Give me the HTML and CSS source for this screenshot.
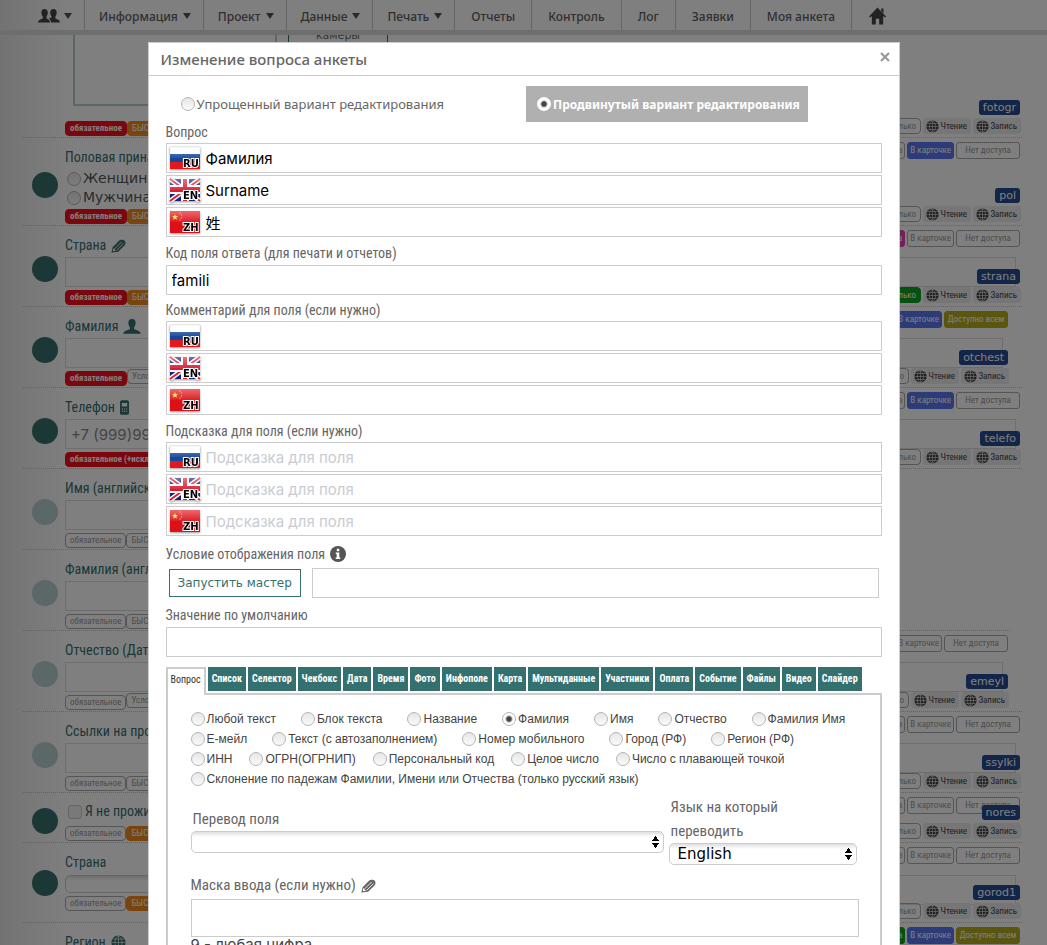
FILE: index.html
```html
<!DOCTYPE html>
<html lang="ru">
<head>
<meta charset="utf-8">
<title>Изменение вопроса анкеты</title>
<link rel="stylesheet" href="styles.css">
</head>
<body>
<svg class="sprite" aria-hidden="true">
  <defs>
    <linearGradient id="gloss" x1="0" y1="0" x2="0" y2="1"><stop offset="0" stop-color="#fff" stop-opacity=".38"/><stop offset="1" stop-color="#fff" stop-opacity=".06"/></linearGradient>
    <symbol id="flag-ru" viewBox="0 0 32 24"><path fill="#fff" d="M1 1h30v7H1z"/><path fill="#14489a" d="M1 8h30v8H1z"/><path fill="#e2181c" d="M1 16h30v7H1z"/><path fill="none" stroke="#ccc" stroke-width=".5" d="M1 8V1h30v7"/><path fill="url(#gloss)" d="M1 1h30v11H1z"/></symbol>
    <symbol id="flag-en" viewBox="0 0 32 24"><path fill="#1a1f78" d="M1 1h30v22H1z"/><path stroke="#fff" stroke-width="5" d="M1 1l30 22M31 1L1 23"/><path stroke="#d81e34" stroke-width="2" d="M1 1l30 22M31 1L1 23"/><path fill="#fff" d="M12 1h8v22h-8z"/><path fill="#fff" d="M1 7h30v9H1z"/><path fill="#d81e34" d="M14 1h4v22h-4z"/><path fill="#d81e34" d="M1 9h30v5H1z"/><path fill="url(#gloss)" d="M1 1h30v11H1z"/></symbol>
    <symbol id="flag-zh" viewBox="0 0 32 24"><path fill="#dd1017" d="M1 1h30v22H1z"/><path fill="#ffe636" d="M6 4l.8 2.100 2.200.1-1.700 1.400.6 2.200L6 8.600 4.100 9.800l.6-2.200L3 6.200l2.200-.1z"/><path fill="#ffe636" d="M10.500 2.500h1v1h-1zM12 4.500h1v1h-1zM12 7.500h1v1h-1zM10.500 9.500h1v1h-1z"/><path fill="url(#gloss)" d="M1 1h30v11H1z"/></symbol>
    <symbol id="globe" viewBox="0 0 16 16"><circle cx="8" cy="8" r="7.500" fill="currentColor"/><path fill="none" stroke="#fff" stroke-opacity=".75" stroke-width=".9" d="M8 .5v15M.5 8h15M2 4.300h12M2 11.700h12M8 .5C3 4 3 12 8 15.500M8 .5c5 3.500 5 11.500 0 15"/></symbol>
    <symbol id="user" viewBox="0 0 18 15"><path fill="currentColor" d="M9 0c2.500 0 3.700 1.600 3.600 4 0 2-.8 3.500-1.500 4.300v1.900c2 .8 6.400 1.500 6.700 4.600H.2c.3-3.100 4.700-3.800 6.700-4.600V8.300C6.200 7.500 5.400 6 5.400 4 5.300 1.600 6.500 0 9 0z"/></symbol>
    <symbol id="users" viewBox="0 0 22 14"><path fill="currentColor" d="M6.500 0c2.100 0 3.400 1.300 3.300 3.600 0 1.900-.7 3.200-1.300 4v2c1.500.7 3.300 1.200 3.500 4H0c.2-2.800 3.200-3.200 4.700-4v-2c-.6-.8-1.300-2.100-1.300-4C3.300 1.300 4.500 0 6.500 0zM15.500 0c2.100 0 3.300 1.300 3.200 3.600 0 1.900-.7 3.200-1.300 4v2c1.500.8 4.400 1.200 4.600 4h-9c-.1-2.200-1-3.300-2.200-4 1-.6 1.300-.4 2.700-1V7.600c-.6-.8-1.300-2.100-1.300-4C12.200 1.300 13.500 0 15.500 0z"/></symbol>
    <symbol id="home" viewBox="0 0 18 18"><path fill="currentColor" d="M9 0l9 9.500-1.200 1.200-1.800-1.800V18h-4.200v-6H7.200v6H3V8.900l-1.800 1.800L0 9.500zM13 1h2.300v5L13 3.600z"/></symbol>
    <symbol id="pencil" viewBox="0 0 16 14"><path fill="currentColor" d="M.4 13.800l1.300-5.500L8.800 1.200C10.200-.2 16-.3 15.400 4.200c-.1 1-.5 1.800-1.200 2.500L7.600 13z"/><path fill="none" stroke="#fff" stroke-width=".9" d="M4 10l7.300-7.300M6 11.700l7.400-7.400"/><path fill="#fff" d="M2.500 9.200l2.800 2.800-2.600.6-.8-.8z"/></symbol>
    <symbol id="phone" viewBox="0 0 10 16"><path fill="currentColor" fill-rule="evenodd" d="M1.500 0h7L10 1.200V15l-1 1H1l-1-1V1.200zM2 3v4h6V3zM2 9v1.200h1.400V9zm2.300 0v1.200h1.400V9zm2.300 0v1.200H8V9zM2 11.500v1.200h1.400v-1.200zm2.300 0v1.200h1.400v-1.200zm2.300 0v1.200H8v-1.200z"/></symbol>
    <symbol id="info" viewBox="0 0 16 16"><circle cx="8" cy="8" r="8" fill="currentColor"/><path fill="#fff" d="M6.800 2.800h2.500v2.400H6.800zM5.800 6.600h3.500v4.900h1V13H5.700v-1.500h1V8h-.9z"/></symbol>
  </defs>
</svg>

<div class="page">
  <nav class="topnav">
    <a class="topnav-item people" href="#" aria-label="Пользователи"><svg class="i-users"><use href="#users"/></svg><i class="caret"></i></a>
    <a class="topnav-item" href="#">Информация<i class="caret"></i></a>
    <a class="topnav-item" href="#">Проект<i class="caret"></i></a>
    <a class="topnav-item" href="#">Данные<i class="caret"></i></a>
    <a class="topnav-item" href="#">Печать<i class="caret"></i></a>
    <a class="topnav-item link" href="#">Отчеты</a>
    <a class="topnav-item link" href="#">Контроль</a>
    <a class="topnav-item link" href="#">Лог</a>
    <a class="topnav-item link" href="#">Заявки</a>
    <a class="topnav-item link" href="#">Моя анкета</a>
    <a class="topnav-item" href="#" aria-label="Домой"><svg class="i-home"><use href="#home"/></svg></a>
  </nav>

  <main class="list">
    <section class="row photo-row">
      <div class="dotcol"></div>
      <div class="body">
        <div class="photo"><div class="photo-box"></div><div class="camera">камеры</div></div>
        <div class="tags"><span class="tag red">обязательное</span><span class="tag orange">БЫСТРОЕ</span></div>
      </div>
      <div class="meta"><b class="badge">fotogr</b><div class="acts"><span class="tag">Только</span><button class="act"><svg><use href="#globe"/></svg>Чтение</button><button class="act"><svg><use href="#globe"/></svg>Запись</button></div><div class="pills"><span class="pill">Да</span><span class="pill blue">В карточке</span><span class="pill wide">Нет доступа</span></div></div>
    </section>
    <section class="row">
      <div class="dotcol"><i class="dot"></i></div>
      <div class="body">
        <h3>Половая принадлежность</h3>
        <div class="choices"><label><input type="radio" name="sex">Женщина</label><label><input type="radio" name="sex">Мужчина</label></div>
        <div class="tags"><span class="tag red">обязательное</span><span class="tag orange">БЫСТРОЕ</span></div>
      </div>
      <div class="meta"><b class="badge">pol</b><div class="acts"><span class="tag">Только</span><button class="act"><svg><use href="#globe"/></svg>Чтение</button><button class="act"><svg><use href="#globe"/></svg>Запись</button></div><div class="pills"><span class="pill pink">Да</span><span class="pill">В карточке</span><span class="pill wide">Нет доступа</span></div></div>
    </section>
    <section class="row">
      <div class="dotcol"><i class="dot"></i></div>
      <div class="body">
        <h3>Страна <svg class="i-pencil"><use href="#pencil"/></svg></h3>
        <input class="box" aria-label="Страна">
        <div class="tags"><span class="tag red">обязательное</span><span class="tag orange">БЫСТРОЕ</span></div>
      </div>
      <div class="meta"><b class="badge">strana</b><div class="acts"><span class="tag green">Только</span><button class="act"><svg><use href="#globe"/></svg>Чтение</button><button class="act"><svg><use href="#globe"/></svg>Запись</button></div><div class="pills inset"><span class="pill blue">В карточке</span><span class="pill wide olive">Доступно всем</span></div></div>
    </section>
    <section class="row short">
      <div class="dotcol"><i class="dot"></i></div>
      <div class="body">
        <h3>Фамилия <svg class="i-user"><use href="#user"/></svg></h3>
        <input class="box" aria-label="Фамилия">
        <div class="tags"><span class="tag red">обязательное</span><span class="tag raised">Условие</span></div>
      </div>
      <div class="meta"><b class="badge">otchest</b><div class="acts"><span class="tag">Только</span><button class="act"><svg><use href="#globe"/></svg>Чтение</button><button class="act"><svg><use href="#globe"/></svg>Запись</button></div><div class="pills"><span class="pill">Да</span><span class="pill blue">В карточке</span><span class="pill wide">Нет доступа</span></div></div>
    </section>
    <section class="row">
      <div class="dotcol"><i class="dot"></i></div>
      <div class="body">
        <h3>Телефон <svg class="i-phone"><use href="#phone"/></svg></h3>
        <input class="box" aria-label="Телефон" placeholder="+7 (999)999-99-99">
        <div class="tags"><span class="tag red">обязательное (+исключение)</span></div>
      </div>
      <div class="meta"><b class="badge">telefo</b><div class="acts"><span class="tag">Только</span><button class="act"><svg><use href="#globe"/></svg>Чтение</button><button class="act"><svg><use href="#globe"/></svg>Запись</button></div></div>
    </section>
    <section class="row half">
      <div class="dotcol"><i class="dot pale"></i></div>
      <div class="body">
        <h3>Имя (английский)</h3>
        <input class="box" aria-label="Имя">
        <div class="tags"><span class="tag">обязательное</span><span class="tag">БЫСТРОЕ</span></div>
      </div>
    </section>
    <section class="row pills-only">
      <div class="dotcol"><i class="dot pale"></i></div>
      <div class="body">
        <h3>Фамилия (английский)</h3>
        <input class="box" aria-label="Фамилия (английский)">
        <div class="tags"><span class="tag">обязательное</span><span class="tag">БЫСТРОЕ</span></div>
      </div>
      <div class="meta"><div class="pills"><span class="pill">В карточке</span><span class="pill wide">Нет доступа</span></div></div>
    </section>
    <section class="row short">
      <div class="dotcol"><i class="dot pale"></i></div>
      <div class="body">
        <h3>Отчество (Дательный)</h3>
        <input class="box" aria-label="Отчество">
        <div class="tags"><span class="tag">обязательное</span><span class="tag raised">Условие</span></div>
      </div>
      <div class="meta"><b class="badge">emeyl</b><div class="acts"><span class="tag">Только</span><button class="act"><svg><use href="#globe"/></svg>Чтение</button><button class="act"><svg><use href="#globe"/></svg>Запись</button></div><div class="pills"><span class="pill">Да</span><span class="pill">В карточке</span><span class="pill wide">Нет доступа</span></div></div>
    </section>
    <section class="row">
      <div class="dotcol"><i class="dot pale"></i></div>
      <div class="body">
        <h3>Ссылки на профили</h3>
        <input class="box" aria-label="Ссылки">
        <div class="tags"><span class="tag">обязательное</span><span class="tag">БЫСТРОЕ</span></div>
      </div>
      <div class="meta"><b class="badge">ssylki</b><div class="acts"><span class="tag">Только</span><button class="act"><svg><use href="#globe"/></svg>Чтение</button><button class="act"><svg><use href="#globe"/></svg>Запись</button></div><div class="pills"><span class="pill">Да</span><span class="pill">В карточке</span><span class="pill wide">Нет доступа</span></div></div>
    </section>
    <section class="row thin">
      <div class="dotcol"><i class="dot"></i></div>
      <div class="body">
        <h3><label class="check"><input type="checkbox">Я не проживаю</label></h3>
        <div class="tags"><span class="tag">обязательное</span><span class="tag orange">БЫСТРОЕ</span></div>
      </div>
      <div class="meta"><b class="badge">nores</b><div class="acts"><span class="tag">Только</span><button class="act"><svg><use href="#globe"/></svg>Чтение</button><button class="act"><svg><use href="#globe"/></svg>Запись</button></div><div class="pills"><span class="pill">Да</span><span class="pill">В карточке</span><span class="pill wide">Нет доступа</span></div></div>
    </section>
    <section class="row roomy">
      <div class="dotcol"><i class="dot"></i></div>
      <div class="body">
        <h3>Страна</h3>
        <div class="selectline"><select class="drop" aria-label="Страна"><option></option></select><input class="box" aria-label="Город"></div>
        <div class="tags"><span class="tag">обязательное</span><span class="tag orange">БЫСТРОЕ</span></div>
      </div>
      <div class="meta"><b class="badge">gorod1</b><div class="acts"><span class="tag">Только</span><button class="act"><svg><use href="#globe"/></svg>Чтение</button><button class="act"><svg><use href="#globe"/></svg>Запись</button></div><div class="pills"><span class="pill green">Да</span><span class="pill blue">В карточке</span><span class="pill wide olive">Доступно всем</span></div></div>
    </section>
    <section class="row">
      <div class="dotcol"></div>
      <div class="body"><h3>Регион <svg class="i-globe"><use href="#globe"/></svg></h3></div>
    </section>
  </main>
</div>

<div class="overlay">
  <div class="modal" role="dialog" aria-labelledby="dlg-title">
    <header class="modal-head">
      <h2 id="dlg-title">Изменение вопроса анкеты</h2>
      <button class="close" aria-label="Закрыть"><svg viewBox="0 0 10 10"><path d="M1 1l8 8M9 1L1 9" fill="none" stroke="#999" stroke-width="2.200"/></svg></button>
    </header>
    <form class="modal-body">
      <div class="modes">
        <label class="mode"><input type="radio" name="mode">Упрощенный вариант редактирования</label>
        <label class="mode active"><input type="radio" name="mode" checked>Продвинутый вариант редактирования</label>
      </div>

      <label class="caption tight" for="q-ru">Вопрос</label>
      <div class="fields">
        <div class="field"><svg class="flag"><use href="#flag-ru"/><text x="14" y="21">RU</text></svg><input id="q-ru" value="Фамилия"></div>
        <div class="field"><svg class="flag"><use href="#flag-en"/><text x="14" y="21">EN</text></svg><input aria-label="Вопрос EN" value="Surname"></div>
        <div class="field"><svg class="flag"><use href="#flag-zh"/><text x="14" y="21">ZH</text></svg><input aria-label="Вопрос ZH" value="姓"></div>
      </div>

      <label class="caption" for="code">Код поля ответа (для печати и отчетов)</label>
      <div class="fields"><div class="field plain"><input id="code" value="famili"></div></div>

      <label class="caption low" for="c-ru">Комментарий для поля (если нужно)</label>
      <div class="fields">
        <div class="field"><svg class="flag"><use href="#flag-ru"/><text x="14" y="21">RU</text></svg><input id="c-ru"></div>
        <div class="field"><svg class="flag"><use href="#flag-en"/><text x="14" y="21">EN</text></svg><input aria-label="Комментарий EN"></div>
        <div class="field"><svg class="flag"><use href="#flag-zh"/><text x="14" y="21">ZH</text></svg><input aria-label="Комментарий ZH"></div>
      </div>

      <label class="caption mid" for="h-ru">Подсказка для поля (если нужно)</label>
      <div class="fields">
        <div class="field"><svg class="flag"><use href="#flag-ru"/><text x="14" y="21">RU</text></svg><input id="h-ru" placeholder="Подсказка для поля"></div>
        <div class="field"><svg class="flag"><use href="#flag-en"/><text x="14" y="21">EN</text></svg><input aria-label="Подсказка EN" placeholder="Подсказка для поля"></div>
        <div class="field"><svg class="flag"><use href="#flag-zh"/><text x="14" y="21">ZH</text></svg><input aria-label="Подсказка ZH" placeholder="Подсказка для поля"></div>
      </div>

      <label class="caption tall" for="cond">Условие отображения поля <svg class="i-info"><use href="#info"/></svg></label>
      <div class="condition">
        <button type="button" class="wizard">Запустить мастер</button>
        <div class="field plain"><input id="cond"></div>
      </div>

      <label class="caption last" for="def">Значение по умолчанию</label>
      <div class="fields"><div class="field plain"><input id="def"></div></div>

      <div class="tabs" role="tablist">
        <button type="button" class="tab current" role="tab">Вопрос</button>
        <button type="button" class="tab" role="tab">Список</button>
        <button type="button" class="tab" role="tab">Селектор</button>
        <button type="button" class="tab" role="tab">Чекбокс</button>
        <button type="button" class="tab" role="tab">Дата</button>
        <button type="button" class="tab" role="tab">Время</button>
        <button type="button" class="tab" role="tab">Фото</button>
        <button type="button" class="tab" role="tab">Инфополе</button>
        <button type="button" class="tab" role="tab">Карта</button>
        <button type="button" class="tab" role="tab">Мультиданные</button>
        <button type="button" class="tab" role="tab">Участники</button>
        <button type="button" class="tab" role="tab">Оплата</button>
        <button type="button" class="tab" role="tab">Событие</button>
        <button type="button" class="tab" role="tab">Файлы</button>
        <button type="button" class="tab" role="tab">Видео</button>
        <button type="button" class="tab" role="tab">Слайдер</button>
      </div>
      <div class="panel">
        <div class="kinds">
          <div class="kindline"><label><input type="radio" name="kind">Любой текст</label><label><input type="radio" name="kind">Блок текста</label><label><input type="radio" name="kind">Название</label><label><input type="radio" name="kind" checked>Фамилия</label><label><input type="radio" name="kind">Имя</label><label><input type="radio" name="kind">Отчество</label><label><input type="radio" name="kind">Фамилия Имя</label></div>
          <div class="kindline"><label><input type="radio" name="kind">Е-мейл</label><label><input type="radio" name="kind">Текст (с автозаполнением)</label><label><input type="radio" name="kind">Номер мобильного</label><label><input type="radio" name="kind">Город (РФ)</label><label><input type="radio" name="kind">Регион (РФ)</label></div>
          <div class="kindline close-set"><label><input type="radio" name="kind">ИНН</label><label><input type="radio" name="kind">ОГРН(ОГРНИП)</label><label><input type="radio" name="kind">Персональный код</label><label><input type="radio" name="kind">Целое число</label><label><input type="radio" name="kind">Число с плавающей точкой</label></div>
          <div class="kindline"><label><input type="radio" name="kind">Склонение по падежам Фамилии, Имени или Отчества (только русский язык)</label></div>
        </div>
        <div class="translate">
          <div class="source"><label for="tr">Перевод поля</label><select id="tr" class="drop"><option></option></select></div>
          <div class="target"><label for="lang">Язык на который<br>переводить</label><select id="lang" class="drop"><option>English</option></select></div>
        </div>
        <label class="mask-label" for="mask">Маска ввода (если нужно) <svg class="i-pencil"><use href="#pencil"/></svg></label>
        <input id="mask" class="mask">
        <p class="hint">9 - любая цифра</p>
      </div>
    </form>
  </div>
</div>
</body>
</html>
```
FILE: styles.css
```css
:root {
  --narrow: "Roboto Condensed", "Liberation Sans Narrow", "Open Sans Condensed", "DejaVu Sans Condensed", sans-serif;
  --humanist: "Noto Sans", "Open Sans", sans-serif;
  --wide: "DejaVu Sans", sans-serif;
  --plain: Inter, "Noto Sans CJK SC", sans-serif;
  --teal: #357070;
}
* { box-sizing: border-box; }
html, body { height: 100%; }
body { margin: 0; overflow: hidden; font-family: var(--humanist); color: #666; background: #fff; }
button, input, select { font: inherit; color: inherit; margin: 0; }
.sprite { position: absolute; width: 0; height: 0; }

/* shared controls */
input[type="radio"] {
  appearance: none; flex: none; width: 14px; height: 14px; border: 1px solid #b5b5b5; border-radius: 50%;
  background: linear-gradient(#e6e6e6, #fafafa);
}
input[type="radio"]:checked { background: radial-gradient(circle, #444 0 2px, #fff 4px); }
.drop {
  appearance: none; display: block; width: 100%; height: 22px; padding: 0 8px; border: 1px solid #ccc; border-radius: 5px;
  color: #000; font: 15px/20px var(--wide);
  background-color: #fff;
  background-image:
    conic-gradient(from 145deg at 50% 0, #000 0 70deg, transparent 0),
    conic-gradient(from -35deg at 50% 100%, #000 0 70deg, transparent 0),
    linear-gradient(#e0e0e0, #fff 5px);
  background-repeat: no-repeat;
  background-size: 7px 5px, 7px 5px, 100% 100%;
  background-position: right 4px top 4px, right 4px bottom 4px, 0 0;
}

/* page behind the dialog */
.page { height: 100vh; overflow: hidden; background: linear-gradient(90deg, #e6e6e6, #fff 70px); }
.topnav { display: flex; height: 35px; padding-left: 24px; border-bottom: 5px solid #dcdcdc; }
.topnav-item {
  display: flex; align-items: center; gap: 5px; padding: 2px 12px 0 14px; border-right: 1px solid #ccc;
  color: #606060; font-size: 12px; font-weight: 500; text-decoration: none; white-space: nowrap;
}
.topnav-item.link { padding: 2px 16px 0; }
.topnav-item:last-child { border-right: 0; padding-left: 17px; }
.people { gap: 4px; padding-right: 12px; }
.caret { border: 4px solid transparent; border-top: 6px solid #555; border-bottom: 0; }
.i-users { width: 22px; height: 14px; color: #444; }
.i-home { width: 17px; height: 18px; color: #444; }

.list { margin: 0 25px 0 23px; }
.row { position: relative; display: flex; border-bottom: 1px dotted #c4c4c4; }
.dotcol { flex: none; width: 42px; display: flex; align-items: center; padding: 6px 0 0 9px; }
.dot { width: 26px; height: 26px; border-radius: 50%; background: #37706f; }
.dot.pale { background: #b9cfd1; }
.body { flex: 1; min-width: 0; padding: 8px 6px 1px 0; }
.photo-row .body { padding-top: 0; }
.short .body { padding-right: 19px; }
.half { margin-right: 140px; }
.pills-only { margin-right: 12px; }
.pills-only .body { padding-right: 140px; }
.thin .body { padding-top: 7px; }
.roomy .body { padding-bottom: 11px; }
.roomy .dotcol { padding-top: 0; }
.row h3 { display: flex; align-items: center; gap: 5px; height: 23px; margin: 0; color: var(--teal); font: 14px/23px var(--narrow); }
.box { display: block; width: 100%; height: 30px; padding: 0 5px; border: 1px solid #dcdcdc; background: transparent; font: 15px var(--plain); }
.box::placeholder { color: #888; opacity: 1; }
.i-pencil { width: 15px; height: 14px; }
.i-user { width: 18px; height: 15px; }
.i-phone { width: 9px; height: 15px; }
.i-globe { width: 15px; height: 15px; }
.choices { display: flex; flex-direction: column; height: 37px; padding-left: 2px; color: #555; font: 14px/19px var(--wide); }
.choices label { display: flex; align-items: center; gap: 2px; }
.photo { display: flex; gap: 11px; padding-left: 8px; height: 83px; }
.photo-box { width: 204px; height: 71px; border: 2px solid #b9cfd1; border-top: 0; }
.camera { display: flex; justify-content: center; width: 100px; height: 20px; overflow: hidden; border: solid var(--teal); border-width: 0 1px; font: 11px/1px var(--wide); }
.check { display: flex; align-items: center; gap: 3px; padding-left: 3px; }
.check input { appearance: none; width: 14px; height: 14px; border: 1px solid #ccc; border-radius: 3px; background: #f2f2f2; }
.selectline { display: flex; height: 19px; padding-top: 1px; }
.selectline .drop { height: 18px; }

.tags { display: flex; margin-top: 3px; }
.tag {
  height: 15px; padding: 0 4px; border: 1px solid #aaa; border-radius: 4px; color: #999;
  font: 9px/13px var(--narrow); white-space: nowrap;
}
.tag.raised { margin-top: -2px; }
.tag.red { background: #f40f1c; border-color: #f40f1c; color: #fff; font-weight: bold; }
.tag.orange { background: #f08a1c; border-color: #f08a1c; color: #fff; }
.tag.green, .pill.green { background: #10a020; border-color: #10a020; color: #fff; }

.meta { position: absolute; right: 2px; top: calc(100% - 37px); display: flex; flex-direction: column; align-items: flex-end; }
.short .meta { right: 14px; }
.short .pills { margin-right: -12px; }
.pills-only .meta { top: calc(100% - 3px); }
.badge { height: 15px; padding: 0 4px; border-radius: 3px; background: #264a90; color: #fff; font: 11px/15px var(--wide); }
.acts { display: flex; gap: 2px; margin: 3px -1px 0 0; }
.acts .tag { height: 16px; line-height: 14px; }
.act {
  display: flex; align-items: center; justify-content: space-between; width: 48px; height: 16px; padding: 0 4px 0 3px;
  border: 0; border-radius: 3px; background: #ececec; color: #444; font: 9px/16px var(--narrow);
}
.act svg { width: 13px; height: 13px; color: #444; }
.pills { display: flex; gap: 2px; margin-top: 8px; }
.pills.inset { margin-right: 12px; }
.pill {
  height: 17px; min-width: 12px; padding: 0 2px; border: 1px solid #aaa; border-radius: 3px; color: #999;
  font: 9px/15px var(--narrow); white-space: nowrap; text-align: center;
}
.pill.wide { min-width: 64px; }
.pill.blue { background: #5a78f0; border-color: #5a78f0; color: #fff; }
.pill.pink { background: #e83fb0; border-color: #e83fb0; color: #fff; }
.pill.olive { background: #b4ac20; border-color: #b4ac20; color: #fff; }

/* dialog */
.overlay { position: fixed; inset: 0; overflow: hidden; display: flex; justify-content: center; align-items: flex-start; padding-top: 42px; background: rgba(0, 0, 0, .5); }
.modal { width: 100%; max-width: 752px; border: 1px solid #ccc; background: #fff; }
.modal-head { display: flex; align-items: center; justify-content: space-between; height: 33px; padding: 0 9px 0 12px; border-bottom: 1px solid #ccc; }
.modal-head h2 { margin: 0; font-size: 15px; font-weight: 500; color: #666; }
.close { display: flex; width: 10px; padding: 0 0 4px; border: 0; background: none; }
.modal-body { padding: 10px 17px 40px; }
.modes { display: flex; gap: 82px; padding-left: 15px; }
.mode { display: flex; align-items: center; gap: 2px; height: 36px; font-size: 13px; white-space: nowrap; }
.mode.active { padding: 0 8px 0 11px; background: #b0b0b0; color: #fff; font-size: 12px; font-weight: 700; }
.mode.active input { border-color: #fff; }
.caption { display: flex; align-items: center; gap: 5px; height: 28px; padding-top: 4px; font: 14px/22px var(--narrow); color: #666; }
.caption.tight { height: 21px; padding: 0 0 2px; }
.caption.low { height: 26px; }
.caption.mid { height: 27px; }
.caption.last { height: 29px; }
.caption.tall { height: 32px; }
.i-info { width: 16px; height: 16px; color: #555; }
.fields { display: flex; flex-direction: column; gap: 2px; }
.field { display: flex; align-items: center; height: 30px; padding-left: 2px; border: 1px solid #ccc; background: #fff; }
.field.plain { padding-left: 0; }
.field input { flex: 1; min-width: 0; height: 28px; padding: 0 5px; border: 0; background: none; color: #000; font: 15px var(--plain); }
.field input::placeholder { color: #c8ccd2; opacity: 1; }
.flag { flex: none; width: 32px; height: 24px; filter: drop-shadow(0 1px 1px rgba(0, 0, 0, .4)); }
.flag text { font: bold 10px var(--wide); fill: #000; stroke: #fff; stroke-width: 2px; paint-order: stroke; }
.condition { display: flex; align-items: center; gap: 11px; padding: 0 3px; }
.condition .field { flex: 1; }
.wizard { height: 28px; padding: 0 8px; border: 1px solid var(--teal); background: #fff; color: var(--teal); font: 12px var(--wide); }

.tabs { display: flex; align-items: flex-start; gap: 2px; margin-top: 10px; }
.tab { height: 24px; padding: 0 4px; border: 0; background: var(--teal); color: #fff; font: bold 10px/24px var(--narrow); white-space: nowrap; }
.tab.current { position: relative; z-index: 1; height: 28px; padding: 0 3px 4px; border: 2px solid #ccc; border-bottom: 0; background: #fff; color: #333; font-weight: 400; line-height: 20px; }
.panel { margin-top: -2px; padding: 14px 21px 20px 23px; border: 2px solid #ccc; }
.kindline { display: flex; gap: 25px; height: 20px; color: #444; font: 12px/20px "Liberation Sans", sans-serif; }
.kindline.close-set { gap: 17px; }
.kindline label { display: flex; align-items: center; gap: 2px; white-space: nowrap; }
.translate { display: flex; align-items: flex-start; gap: 5px; margin-top: 6px; padding-right: 2px; }
.translate label { display: block; padding-left: 2px; font: 15px/24px var(--narrow); color: #666; }
.source { flex: 1; padding-top: 12px; }
.target { width: 188px; }
.mask-label { display: flex; align-items: center; gap: 5px; margin-top: 7px; font: 15px/27px var(--narrow); color: #666; }
.mask { display: block; width: 100%; height: 38px; border: 1px solid #ccc; }
.hint { margin: 0; font: 15px/16px var(--plain); color: #444; }
```
